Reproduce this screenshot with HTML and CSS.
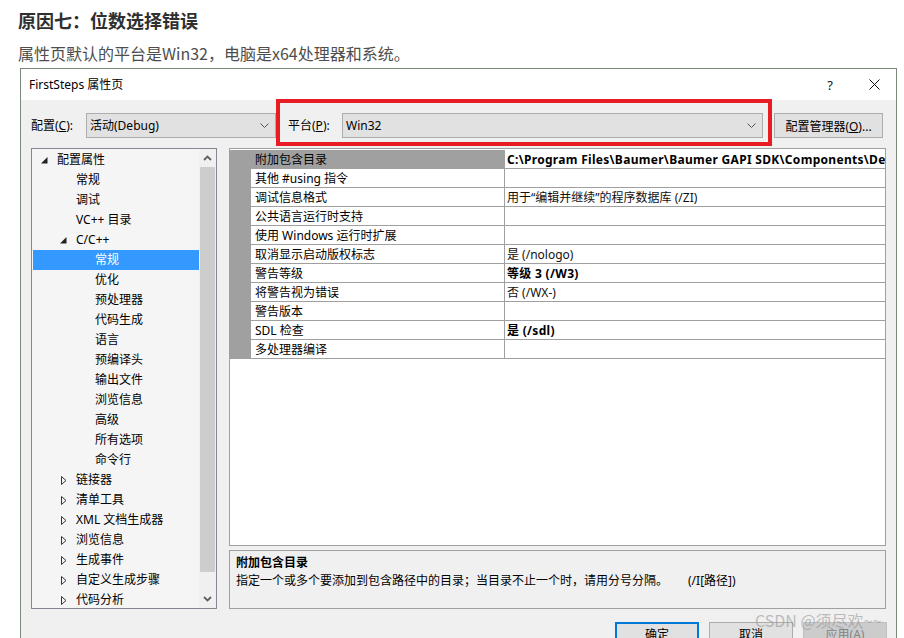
FILE: index.html
```html
<!DOCTYPE html>
<html lang="zh-CN">
<head>
<meta charset="utf-8">
<title>FirstSteps 属性页</title>
<link rel="stylesheet" href="styles.css">
</head>
<body>
<div class="article">
  <h3 class="title">原因七：位数选择错误</h3>
  <p class="lead">属性页默认的平台是Win32，电脑是x64处理器和系统。</p>
</div>

<div class="dialog">
  <div class="titlebar">
    <span class="caption">FirstSteps 属性页</span>
    <span class="help">?</span>
    <span class="close"><svg width="11" height="11" viewBox="0 0 11 11"><path d="M0.5 0.5 L10.5 10.5 M10.5 0.5 L0.5 10.5" stroke="#111" stroke-width="1" fill="none"/></svg></span>
  </div>

  <div class="dbody">
    <div class="configrow">
      <span class="lbl lbl-config">配置(<u>C</u>):</span>
      <div class="combo combo-config"><span class="ctext">活动(Debug)</span><svg class="chev" width="9" height="5" viewBox="0 0 9 5"><path d="M0.5 0.5 L4.5 4.5 L8.5 0.5" stroke="#555" fill="none"/></svg></div>
      <span class="lbl lbl-platform">平台(<u>P</u>):</span>
      <div class="combo combo-platform"><span class="ctext">Win32</span><svg class="chev" width="9" height="5" viewBox="0 0 9 5"><path d="M0.5 0.5 L4.5 4.5 L8.5 0.5" stroke="#555" fill="none"/></svg></div>
      <button class="btn btn-mgr">配置管理器(<u>O</u>)...</button>
    </div>

    <div class="main">
      <div class="tree">
        <div class="tree-list">
          <div class="node l0"><span class="tw"><svg class="exp" width="7" height="7" viewBox="0 0 7 7"><path d="M6.5 0 L6.5 6.5 L0 6.5 Z" fill="#222"/></svg></span><span>配置属性</span></div>
          <div class="node l1"><span class="tw"></span><span>常规</span></div>
          <div class="node l1"><span class="tw"></span><span>调试</span></div>
          <div class="node l1"><span class="tw"></span><span>VC++ 目录</span></div>
          <div class="node l1"><span class="tw"><svg class="exp" width="7" height="7" viewBox="0 0 7 7"><path d="M6.5 0 L6.5 6.5 L0 6.5 Z" fill="#222"/></svg></span><span>C/C++</span></div>
          <div class="node l2 sel"><span class="tw"></span><span>常规</span></div>
          <div class="node l2"><span class="tw"></span><span>优化</span></div>
          <div class="node l2"><span class="tw"></span><span>预处理器</span></div>
          <div class="node l2"><span class="tw"></span><span>代码生成</span></div>
          <div class="node l2"><span class="tw"></span><span>语言</span></div>
          <div class="node l2"><span class="tw"></span><span>预编译头</span></div>
          <div class="node l2"><span class="tw"></span><span>输出文件</span></div>
          <div class="node l2"><span class="tw"></span><span>浏览信息</span></div>
          <div class="node l2"><span class="tw"></span><span>高级</span></div>
          <div class="node l2"><span class="tw"></span><span>所有选项</span></div>
          <div class="node l2"><span class="tw"></span><span>命令行</span></div>
          <div class="node l1"><span class="tw"><svg class="col" width="6" height="9" viewBox="0 0 6 9"><path d="M0.5 0.5 L5 4.5 L0.5 8.5 Z" fill="none" stroke="#333"/></svg></span><span>链接器</span></div>
          <div class="node l1"><span class="tw"><svg class="col" width="6" height="9" viewBox="0 0 6 9"><path d="M0.5 0.5 L5 4.5 L0.5 8.5 Z" fill="none" stroke="#333"/></svg></span><span>清单工具</span></div>
          <div class="node l1"><span class="tw"><svg class="col" width="6" height="9" viewBox="0 0 6 9"><path d="M0.5 0.5 L5 4.5 L0.5 8.5 Z" fill="none" stroke="#333"/></svg></span><span>XML 文档生成器</span></div>
          <div class="node l1"><span class="tw"><svg class="col" width="6" height="9" viewBox="0 0 6 9"><path d="M0.5 0.5 L5 4.5 L0.5 8.5 Z" fill="none" stroke="#333"/></svg></span><span>浏览信息</span></div>
          <div class="node l1"><span class="tw"><svg class="col" width="6" height="9" viewBox="0 0 6 9"><path d="M0.5 0.5 L5 4.5 L0.5 8.5 Z" fill="none" stroke="#333"/></svg></span><span>生成事件</span></div>
          <div class="node l1"><span class="tw"><svg class="col" width="6" height="9" viewBox="0 0 6 9"><path d="M0.5 0.5 L5 4.5 L0.5 8.5 Z" fill="none" stroke="#333"/></svg></span><span>自定义生成步骤</span></div>
          <div class="node l1"><span class="tw"><svg class="col" width="6" height="9" viewBox="0 0 6 9"><path d="M0.5 0.5 L5 4.5 L0.5 8.5 Z" fill="none" stroke="#333"/></svg></span><span>代码分析</span></div>
        </div>
        <div class="vscroll">
          <div class="sbtn"><svg width="9" height="6" viewBox="0 0 9 6"><path d="M1 5 L4.5 1.5 L8 5" stroke="#606060" stroke-width="1.8" fill="none"/></svg></div>
          <div class="track"><div class="thumb"></div></div>
          <div class="sbtn"><svg width="9" height="6" viewBox="0 0 9 6"><path d="M1 1 L4.5 4.5 L8 1" stroke="#606060" stroke-width="1.8" fill="none"/></svg></div>
        </div>
      </div>

      <div class="right">
        <div class="grid">
          <div class="grow sel"><span class="gut"></span><span class="gname">附加包含目录</span><span class="gval b">C:\Program Files\Baumer\Baumer GAPI SDK\Components\Dev\C++\inc;%(AdditionalIncludeDirectories)</span></div>
          <div class="grow"><span class="gut"></span><span class="gname">其他 #using 指令</span><span class="gval"></span></div>
          <div class="grow"><span class="gut"></span><span class="gname">调试信息格式</span><span class="gval">用于“编辑并继续”的程序数据库 (/ZI)</span></div>
          <div class="grow"><span class="gut"></span><span class="gname">公共语言运行时支持</span><span class="gval"></span></div>
          <div class="grow"><span class="gut"></span><span class="gname">使用 Windows 运行时扩展</span><span class="gval"></span></div>
          <div class="grow"><span class="gut"></span><span class="gname">取消显示启动版权标志</span><span class="gval">是 (/nologo)</span></div>
          <div class="grow"><span class="gut"></span><span class="gname">警告等级</span><span class="gval b">等级 3 (/W3)</span></div>
          <div class="grow"><span class="gut"></span><span class="gname">将警告视为错误</span><span class="gval">否 (/WX-)</span></div>
          <div class="grow"><span class="gut"></span><span class="gname">警告版本</span><span class="gval"></span></div>
          <div class="grow"><span class="gut"></span><span class="gname">SDL 检查</span><span class="gval b">是 (/sdl)</span></div>
          <div class="grow"><span class="gut"></span><span class="gname">多处理器编译</span><span class="gval"></span></div>
        </div>
        <div class="desc">
          <div class="desc-title">附加包含目录</div>
          <div class="desc-text">指定一个或多个要添加到包含路径中的目录；当目录不止一个时，请用分号分隔。<span class="desc-switch">(/I[路径])</span></div>
        </div>
      </div>
    </div>

    <div class="buttons">
      <button class="btn dbtn default">确定</button>
      <button class="btn dbtn">取消</button>
      <button class="btn dbtn disabled">应用(<u>A</u>)</button>
    </div>
  </div>

  <div class="redbox"></div>
</div>

<div class="watermark">CSDN @须尽欢~~</div>
</body>
</html>
```

FILE: styles.css
```css
* { box-sizing: border-box; }

html, body {
  margin: 0;
  padding: 0;
  background: #ffffff;
  width: 904px;
  height: 638px;
  overflow: hidden;
  position: relative;
}

body {
  font-family: "Noto Sans", "Noto Sans CJK SC", sans-serif;
}

.article {
  height: 68px;
  padding: 8px 0 0 18px;
}

.title {
  margin: 0;
  font-family: "Noto Sans CJK SC", sans-serif;
  font-size: 18px;
  line-height: 24px;
  font-weight: 700;
  color: #2f2f2f;
}

.lead {
  margin: 9px 0 0 0;
  font-family: "Noto Sans CJK SC", sans-serif;
  font-size: 16px;
  line-height: 24px;
  color: #4d4d4d;
}

.dialog {
  position: relative;
  margin-left: 20px;
  width: 877px;
  height: 600px;
  border: 1px solid #7b897b;
  background: #f0f0f0;
  font-size: 12px;
  color: #000;
}

.titlebar {
  height: 31px;
  background: #ffffff;
  display: flex;
  align-items: center;
  padding-left: 8px;
}

.caption {
  flex: 1;
  font-size: 12px;
  line-height: 16px;
  color: #000;
}

.help {
  width: 30px;
  text-align: center;
  font-size: 13px;
  margin-right: 7px;
  color: #111;
}

.close {
  width: 44px;
  height: 31px;
  display: flex;
  align-items: center;
  justify-content: center;
}

.dbody {
  padding: 13px 10px 0 10px;
}

.configrow {
  display: flex;
  align-items: center;
  height: 25px;
}

.lbl {
  font-size: 12px;
  line-height: 16px;
  white-space: nowrap;
}

.lbl-config { width: 55px; }
.lbl-platform { width: 54px; margin-left: 12px; }

.combo {
  height: 25px;
  border: 1px solid #adadad;
  background: #e1e1e1;
  display: flex;
  align-items: center;
  padding: 0 6px 0 3px;
}

.combo-config { width: 190px; }
.combo-platform { width: 421px; }

.ctext {
  flex: 1;
  font-size: 12px;
  line-height: 16px;
}

.chev { display: block; }

.btn {
  font-family: "Noto Sans", "Noto Sans CJK SC", sans-serif;
  font-size: 12px;
  color: #000;
  background: #e1e1e1;
  border: 1px solid #adadad;
  border-radius: 0;
  padding: 0;
  margin: 0;
}

.btn-mgr {
  margin-left: 11px;
  width: 109px;
  height: 25px;
}

.main {
  display: flex;
  gap: 12px;
  margin-top: 10px;
}

.tree {
  width: 186px;
  height: 461px;
  border: 1px solid #828790;
  background: #f5f5f5;
  display: flex;
  overflow: hidden;
}

.tree-list {
  width: 167px;
  padding: 1px 0 0 1px;
  overflow: hidden;
}

.node {
  height: 20px;
  display: flex;
  align-items: center;
  font-size: 12px;
  line-height: 20px;
  white-space: nowrap;
  color: #000;
}

.node.l0 { padding-left: 5px; }
.node.l1 { padding-left: 24px; }
.node.l2 { padding-left: 43px; }

.node.sel {
  background: #3399ff;
  color: #ffffff;
}

.tw {
  width: 19px;
  height: 20px;
  display: flex;
  align-items: center;
  padding-left: 3px;
}

.tw .col { margin-left: 1px; }
.tw .exp { margin-top: 1px; }

.vscroll {
  width: 17px;
  display: flex;
  flex-direction: column;
  background: #f0f0f0;
}

.sbtn {
  height: 18px;
  display: flex;
  align-items: center;
  justify-content: center;
}

.track {
  flex: 1;
}

.thumb {
  height: 405px;
  margin: 0 1px;
  background: #cdcdcd;
}

.right {
  width: 657px;
  display: flex;
  flex-direction: column;
  gap: 4px;
}

.grid {
  height: 398px;
  border: 1px solid #a0a0a0;
  background: #ffffff;
  padding-top: 1px;
  overflow: hidden;
}

.grow {
  display: flex;
  height: 19px;
}

.gut {
  width: 21px;
  background: #a0a0a0;
}

.gname {
  width: 253px;
  border-bottom: 1px solid #a0a0a0;
  padding-left: 4px;
  font-size: 12px;
  line-height: 20px;
  white-space: nowrap;
  overflow: hidden;
}

.grow.sel .gname {
  background: #a0a0a0;
}

.gval {
  flex: 1;
  border-left: 1px solid #a0a0a0;
  border-bottom: 1px solid #a0a0a0;
  padding-left: 2px;
  font-size: 12px;
  line-height: 20px;
  white-space: nowrap;
  overflow: hidden;
  color: #111;
}

.gval.b { font-weight: 700; color: #000; letter-spacing: 0.3px; }

.desc {
  height: 59px;
  border: 1px solid #a0a0a0;
  background: #f0f0f0;
  padding: 3px 0 0 6px;
}

.desc-title {
  font-weight: 700;
  font-size: 12px;
  line-height: 18px;
}

.desc-text {
  font-size: 12px;
  line-height: 18px;
  white-space: nowrap;
}

.desc-switch {
  margin-left: 20px;
}

.buttons {
  display: flex;
  justify-content: flex-end;
  gap: 10px;
  margin-top: 13px;
  margin-right: -1px;
}

.dbtn {
  width: 84px;
  height: 23px;
}

.dbtn.default {
  border: 1px solid #0078d7;
  box-shadow: inset 0 0 0 1px #0078d7;
}

.dbtn.disabled {
  background: #cccccc;
  border-color: #bfbfbf;
  color: #838383;
}

.redbox {
  position: absolute;
  left: 255px;
  top: 30px;
  width: 496px;
  height: 47px;
  border: 4px solid #e81c24;
  pointer-events: none;
}

.watermark {
  position: absolute;
  left: 755px;
  top: 609px;
  font-family: "Noto Sans CJK SC", sans-serif;
  font-size: 16px;
  line-height: 22px;
  color: rgba(150, 150, 150, 0.6);
  white-space: nowrap;
}
```
